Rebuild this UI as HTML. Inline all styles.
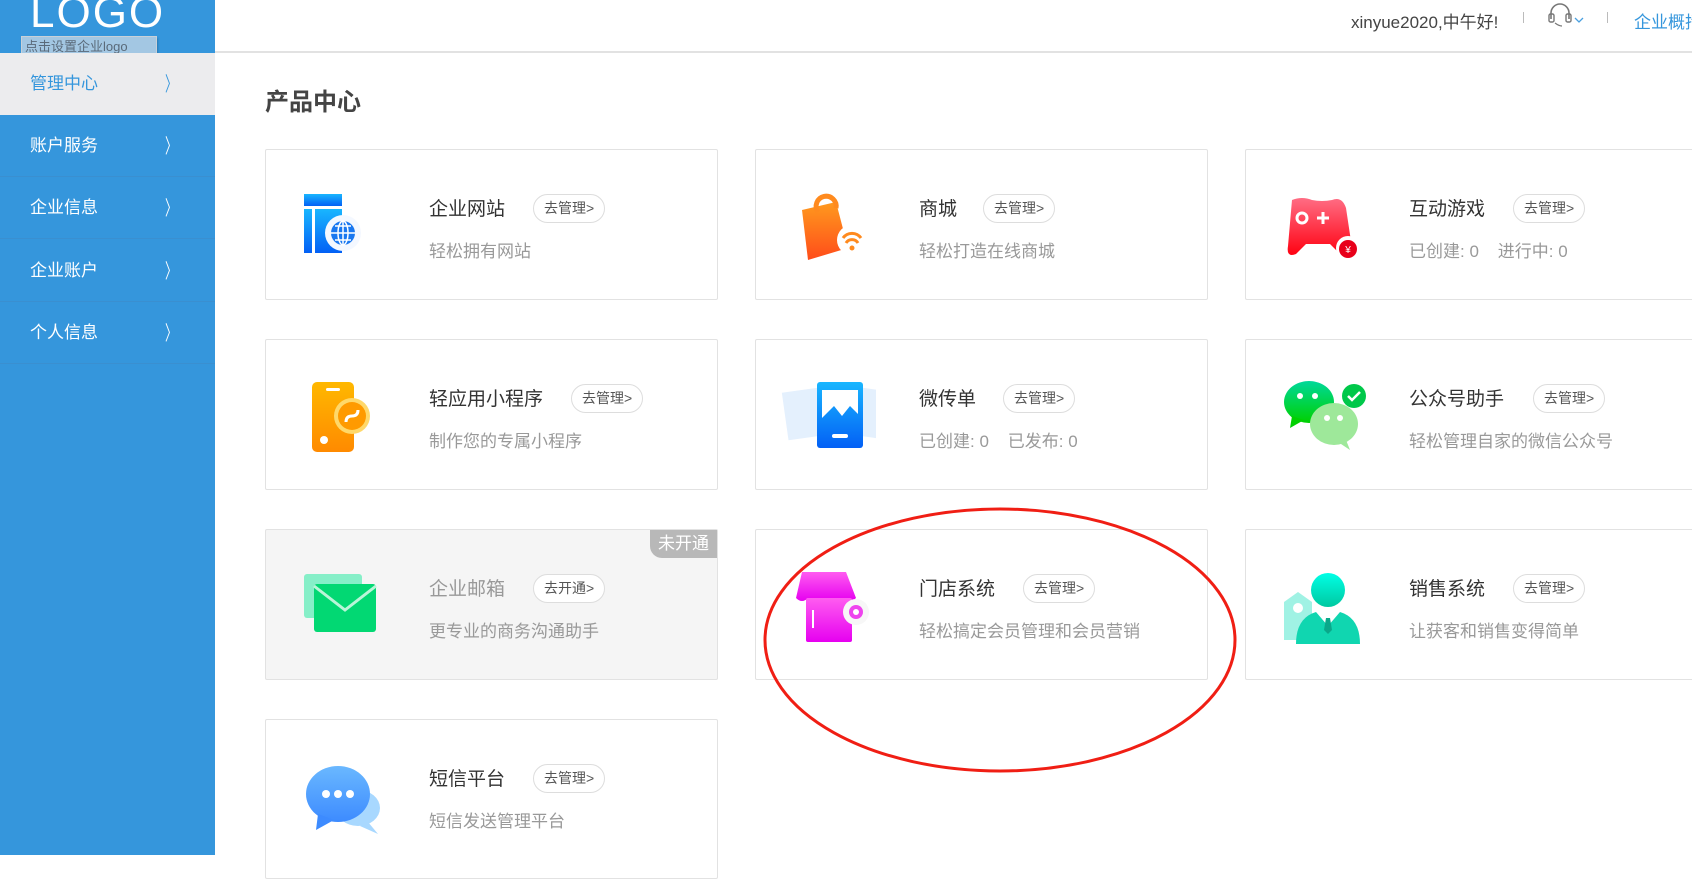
<!DOCTYPE html>
<html><head><meta charset="utf-8">
<style>
*{margin:0;padding:0;box-sizing:border-box}
body{width:1692px;height:855px;overflow:hidden;background:#fff;font-family:"Liberation Sans","Noto Sans CJK SC",sans-serif;position:relative}
.side{position:absolute;left:0;top:0;width:215px;height:855px;background:#3596dc}
.logo{position:absolute;left:30px;top:-12px;color:#fff;font-size:44px;letter-spacing:2px;font-family:"Liberation Sans",sans-serif}
.logolbl{position:absolute;left:21px;top:36px;width:136px;height:21px;background:rgba(200,215,230,.75);border:1px solid #c8d0d8;color:#5a6a7a;font-size:13px;line-height:19px;padding-left:3px;box-shadow:1px 2px 2px rgba(0,0,0,.2);white-space:nowrap}
.menu{position:absolute;left:0;width:215px;height:62px;color:#fff;font-size:17px;line-height:62px;padding-left:30px;border-bottom:1px solid #3a8fd0}
.menu.act{background:#ececee;color:#3596dc;border:none}
.menu .ar{position:absolute;left:161px;top:0;font-size:20px;font-family:"DejaVu Sans",sans-serif;transform:scaleX(.6)}
.hdr{position:absolute;left:215px;top:0;right:0;height:53px;border-bottom:2px solid #e2e2e2}
.htxt{position:absolute;top:8px;font-size:17px;color:#444;white-space:nowrap}
.sep{position:absolute;top:12px;width:1px;height:11px;background:#bbb}
.title{position:absolute;left:265px;top:82px;font-size:24px;font-weight:bold;color:#444}
.card{position:absolute;width:453px;height:151px;border:1px solid #e2e2e2;background:#fff;border-radius:2px}
.card.r{width:460px;border-right:none}
.card .ic{position:absolute;left:36px;top:38px;width:86px;height:80px}
.card .t{position:absolute;left:163px;top:44px;font-size:19px;color:#333;white-space:nowrap}
.card .b{position:absolute;top:44px;height:29px;border:1px solid #ddd;border-radius:15px;font-size:14px;color:#555;line-height:27px;padding:0 10px;background:#fff;white-space:nowrap}
.card .d{position:absolute;left:163px;top:87px;font-size:17px;color:#999;white-space:nowrap}
.dis{background:#f5f5f5}
.dis .t{color:#999}
.badge{position:absolute;right:0;top:0;width:67px;height:28px;background:#b8b8b8;color:#fff;font-size:17px;line-height:28px;text-align:center;border-bottom-left-radius:12px}
</style></head><body>
<div class="side">
 <div class="logo">LOGO</div>
 <div class="logolbl">点击设置企业logo</div>
 <div class="menu act" style="top:53px">管理中心<span class="ar">〉</span></div>
 <div class="menu" style="top:115px">账户服务<span class="ar">〉</span></div>
 <div class="menu" style="top:177px">企业信息<span class="ar">〉</span></div>
 <div class="menu" style="top:240px">企业账户<span class="ar">〉</span></div>
 <div class="menu" style="top:302px">个人信息<span class="ar">〉</span></div>
</div>
<div class="hdr"></div>
<div class="htxt" style="left:1351px">xinyue2020,中午好!</div>
<div class="sep" style="left:1523px"></div>
<svg style="position:absolute;left:1548px;top:2px" width="40" height="28" viewBox="0 0 40 28"><path d="M3 17 V11 a9 9 0 0 1 18 0 V17" fill="none" stroke="#777" stroke-width="1.6"/><rect x="1" y="12" width="5" height="8" rx="1.5" fill="none" stroke="#777" stroke-width="1.4"/><rect x="18" y="12" width="5" height="8" rx="1.5" fill="none" stroke="#777" stroke-width="1.4"/><path d="M7 21 q4 3 7 3" fill="none" stroke="#777" stroke-width="1.2"/><path d="M27 16 l4 4 l4 -4" fill="none" stroke="#4aa0e0" stroke-width="1.3"/></svg>
<div class="sep" style="left:1607px"></div>
<div class="htxt" style="left:1634px;color:#3596dc">企业概括</div>

<div class="title">产品中心</div>

<svg width="0" height="0" style="position:absolute"><defs>
<linearGradient id="gb" x1="0" y1="0" x2="0" y2="1"><stop offset="0" stop-color="#19b6ff"/><stop offset="1" stop-color="#0360f5"/></linearGradient>
<linearGradient id="go" x1="0" y1="0" x2="0" y2="1"><stop offset="0" stop-color="#ff9a1e"/><stop offset="1" stop-color="#ff4c1a"/></linearGradient>
<linearGradient id="gr" x1="0" y1="0" x2="0" y2="1"><stop offset="0" stop-color="#ff6d84"/><stop offset="1" stop-color="#ff0010"/></linearGradient>
<linearGradient id="gy" x1="0" y1="0" x2="0" y2="1"><stop offset="0" stop-color="#ffb800"/><stop offset="1" stop-color="#ff8a00"/></linearGradient>
<linearGradient id="gp" x1="0" y1="0" x2="0" y2="1"><stop offset="0" stop-color="#ff5cf0"/><stop offset="1" stop-color="#e600f0"/></linearGradient>
<linearGradient id="gg" x1="0" y1="0" x2="0" y2="1"><stop offset="0" stop-color="#00d89a"/><stop offset="1" stop-color="#00d000"/></linearGradient>
<linearGradient id="gt" x1="0" y1="0" x2="0" y2="1"><stop offset="0" stop-color="#00ffe6"/><stop offset="1" stop-color="#00c8a0"/></linearGradient>
<linearGradient id="gs" x1="0" y1="0" x2="0" y2="1"><stop offset="0" stop-color="#6ab8ff"/><stop offset="1" stop-color="#3d8bff"/></linearGradient>
</defs></svg>

<!-- Row 1 -->
<div class="card" style="left:265px;top:149px">
 <svg class="ic" viewBox="0 0 86 80"><rect x="2" y="6" width="38" height="12" fill="url(#gb)"/><rect x="2" y="21" width="8" height="44" fill="url(#gb)"/><rect x="13" y="21" width="27" height="44" fill="url(#gb)"/><circle cx="41" cy="45" r="18" fill="#f4f8ff"/><circle cx="41" cy="45" r="12" fill="#1a78f0"/><path d="M29 45h24M41 33v24M33 38h16M33 52h16" stroke="#fff" stroke-width="1.5"/><ellipse cx="41" cy="45" rx="5" ry="12" fill="none" stroke="#fff" stroke-width="1.5"/></svg>
 <div class="t">企业网站</div><div class="b" style="left:267px">去管理&gt;</div>
 <div class="d">轻松拥有网站</div>
</div>
<div class="card" style="left:755px;top:149px">
 <svg class="ic" viewBox="0 0 86 80"><path d="M10 22 L44 14 L56 60 L16 72 Z" fill="url(#go)"/><path d="M26 24 a10 10 0 1 1 18 -4" fill="none" stroke="#ff8a1e" stroke-width="5"/><circle cx="60" cy="52" r="15" fill="#fff"/><path d="M51 50 a11 11 0 0 1 18 0 M54 55 a7 7 0 0 1 12 0" fill="none" stroke="#ff8a1e" stroke-width="3"/><circle cx="60" cy="60" r="2.5" fill="#ff8a1e"/></svg>
 <div class="t">商城</div><div class="b" style="left:227px">去管理&gt;</div>
 <div class="d">轻松打造在线商城</div>
</div>
<div class="card r" style="left:1245px;top:149px">
 <svg class="ic" viewBox="0 0 86 80"><path d="M10 12 Q20 8 30 12 Q40 14 50 12 Q60 8 64 20 L70 60 Q66 72 58 66 L48 56 L24 56 L14 66 Q4 70 6 58 Z" fill="url(#gr)"/><circle cx="20" cy="30" r="5" fill="none" stroke="#fff" stroke-width="3"/><path d="M35 30h12M41 24v12" stroke="#fff" stroke-width="3"/><circle cx="66" cy="60" r="12" fill="#fff"/><circle cx="66" cy="61" r="9" fill="#e8001a"/><text x="66" y="65" font-size="10" fill="#fff" text-anchor="middle" font-family="Liberation Sans">¥</text></svg>
 <div class="t">互动游戏</div><div class="b" style="left:267px">去管理&gt;</div>
 <div class="d">已创建:&nbsp;0&nbsp;&nbsp;&nbsp;&nbsp;进行中:&nbsp;0</div>
</div>

<!-- Row 2 -->
<div class="card" style="left:265px;top:339px">
 <svg class="ic" viewBox="0 0 86 80"><rect x="10" y="4" width="42" height="70" rx="5" fill="url(#gy)"/><rect x="24" y="10" width="14" height="3" rx="1.5" fill="#fff"/><circle cx="22" cy="62" r="4" fill="#fff"/><circle cx="50" cy="38" r="18" fill="#ffd86a"/><circle cx="50" cy="38" r="14" fill="#ff9a00"/><path d="M44 44 q0 -6 6 -6 q6 0 6 -6" fill="none" stroke="#fff" stroke-width="3"/></svg>
 <div class="t">轻应用小程序</div><div class="b" style="left:305px">去管理&gt;</div>
 <div class="d">制作您的专属小程序</div>
</div>
<div class="card" style="left:755px;top:339px">
 <svg class="ic" viewBox="0 0 86 80" style="left:20px;width:100px"><rect x="2" y="12" width="38" height="48" fill="#e4f0fd" transform="rotate(-8 20 36)"/><rect x="62" y="10" width="36" height="48" fill="#e4f0fd" transform="rotate(8 80 34)"/><rect x="34" y="4" width="46" height="66" rx="3" fill="url(#gb)"/><path d="M39 12 h36 v24 l-8-8 -8 10 -8-10 -12 12 z" fill="#fff"/><rect x="49" y="56" width="16" height="4" rx="2" fill="#fff"/></svg>
 <div class="t">微传单</div><div class="b" style="left:247px">去管理&gt;</div>
 <div class="d">已创建:&nbsp;0&nbsp;&nbsp;&nbsp;&nbsp;已发布:&nbsp;0</div>
</div>
<div class="card r" style="left:1245px;top:339px">
 <svg class="ic" viewBox="0 0 86 80"><ellipse cx="27" cy="24" rx="25" ry="21" fill="url(#gg)"/><path d="M10 38 L8 50 L22 42z" fill="#00d000"/><circle cx="18" cy="18" r="3" fill="#fff"/><circle cx="33" cy="18" r="3" fill="#fff"/><ellipse cx="52" cy="46" rx="24" ry="21" fill="#9ee89a"/><path d="M64 62 L68 72 L56 64z" fill="#9ee89a"/><circle cx="45" cy="40" r="3" fill="#fff"/><circle cx="58" cy="40" r="3" fill="#fff"/><circle cx="72" cy="18" r="12" fill="#00c84a"/><path d="M66 18 l4 4 l8 -8" fill="none" stroke="#fff" stroke-width="2.5"/></svg>
 <div class="t">公众号助手</div><div class="b" style="left:287px">去管理&gt;</div>
 <div class="d">轻松管理自家的微信公众号</div>
</div>

<!-- Row 3 -->
<div class="card dis" style="left:265px;top:529px">
 <div class="badge">未开通</div>
 <svg class="ic" viewBox="0 0 86 80"><rect x="2" y="6" width="58" height="44" rx="3" fill="#86efc8"/><rect x="12" y="16" width="62" height="48" rx="3" fill="#02d873"/><path d="M12 18 L43 42 L74 18" fill="none" stroke="#b9f5d8" stroke-width="3"/></svg>
 <div class="t">企业邮箱</div><div class="b" style="left:267px">去开通&gt;</div>
 <div class="d">更专业的商务沟通助手</div>
</div>
<div class="card" style="left:755px;top:529px">
 <svg class="ic" viewBox="0 0 86 80"><path d="M10 4 h44 l10 26 q-6 6 -12 0 q-6 6 -12 0 q-6 6 -12 0 q-6 6 -12 0 q-6 6 -12 0 z" fill="url(#gp)"/><rect x="14" y="30" width="46" height="44" rx="2" fill="url(#gp)"/><rect x="20" y="42" width="2" height="18" fill="#fff"/><circle cx="64" cy="44" r="13" fill="#f7f7f7"/><circle cx="64" cy="44" r="7" fill="#ee44ee"/><circle cx="64" cy="44" r="3" fill="#fff"/></svg>
 <div class="t">门店系统</div><div class="b" style="left:267px">去管理&gt;</div>
 <div class="d">轻松搞定会员管理和会员营销</div>
</div>
<div class="card r" style="left:1245px;top:529px">
 <svg class="ic" viewBox="0 0 86 80"><path d="M2 34 L16 24 L30 34 V72 H2z" fill="#a0f2e4"/><circle cx="16" cy="40" r="5" fill="#fff"/><circle cx="46" cy="22" r="17" fill="url(#gt)"/><path d="M14 76 Q14 50 34 44 L46 58 L58 44 Q78 50 78 76z" fill="#10d6b0"/><path d="M44 50 h4 l2 12 -4 4 -4 -4z" fill="#0aa88a"/></svg>
 <div class="t">销售系统</div><div class="b" style="left:267px">去管理&gt;</div>
 <div class="d">让获客和销售变得简单</div>
</div>

<!-- Row 4 -->
<div class="card" style="left:265px;top:719px;height:160px">
 <svg class="ic" viewBox="0 0 86 80"><ellipse cx="56" cy="50" rx="22" ry="18" fill="#a8d8ff"/><path d="M66 64 L76 76 L58 68z" fill="#a8d8ff"/><ellipse cx="36" cy="36" rx="32" ry="28" fill="url(#gs)"/><path d="M16 56 L14 72 L32 62z" fill="#3d8bff"/><circle cx="24" cy="36" r="4" fill="#fff"/><circle cx="36" cy="36" r="4" fill="#fff"/><circle cx="48" cy="36" r="4" fill="#fff"/></svg>
 <div class="t">短信平台</div><div class="b" style="left:267px">去管理&gt;</div>
 <div class="d">短信发送管理平台</div>
</div>

<svg style="position:absolute;left:0;top:0" width="1692" height="855"><ellipse cx="1000" cy="640" rx="235" ry="131" fill="none" stroke="#f01e14" stroke-width="3"/></svg>
</body></html>
